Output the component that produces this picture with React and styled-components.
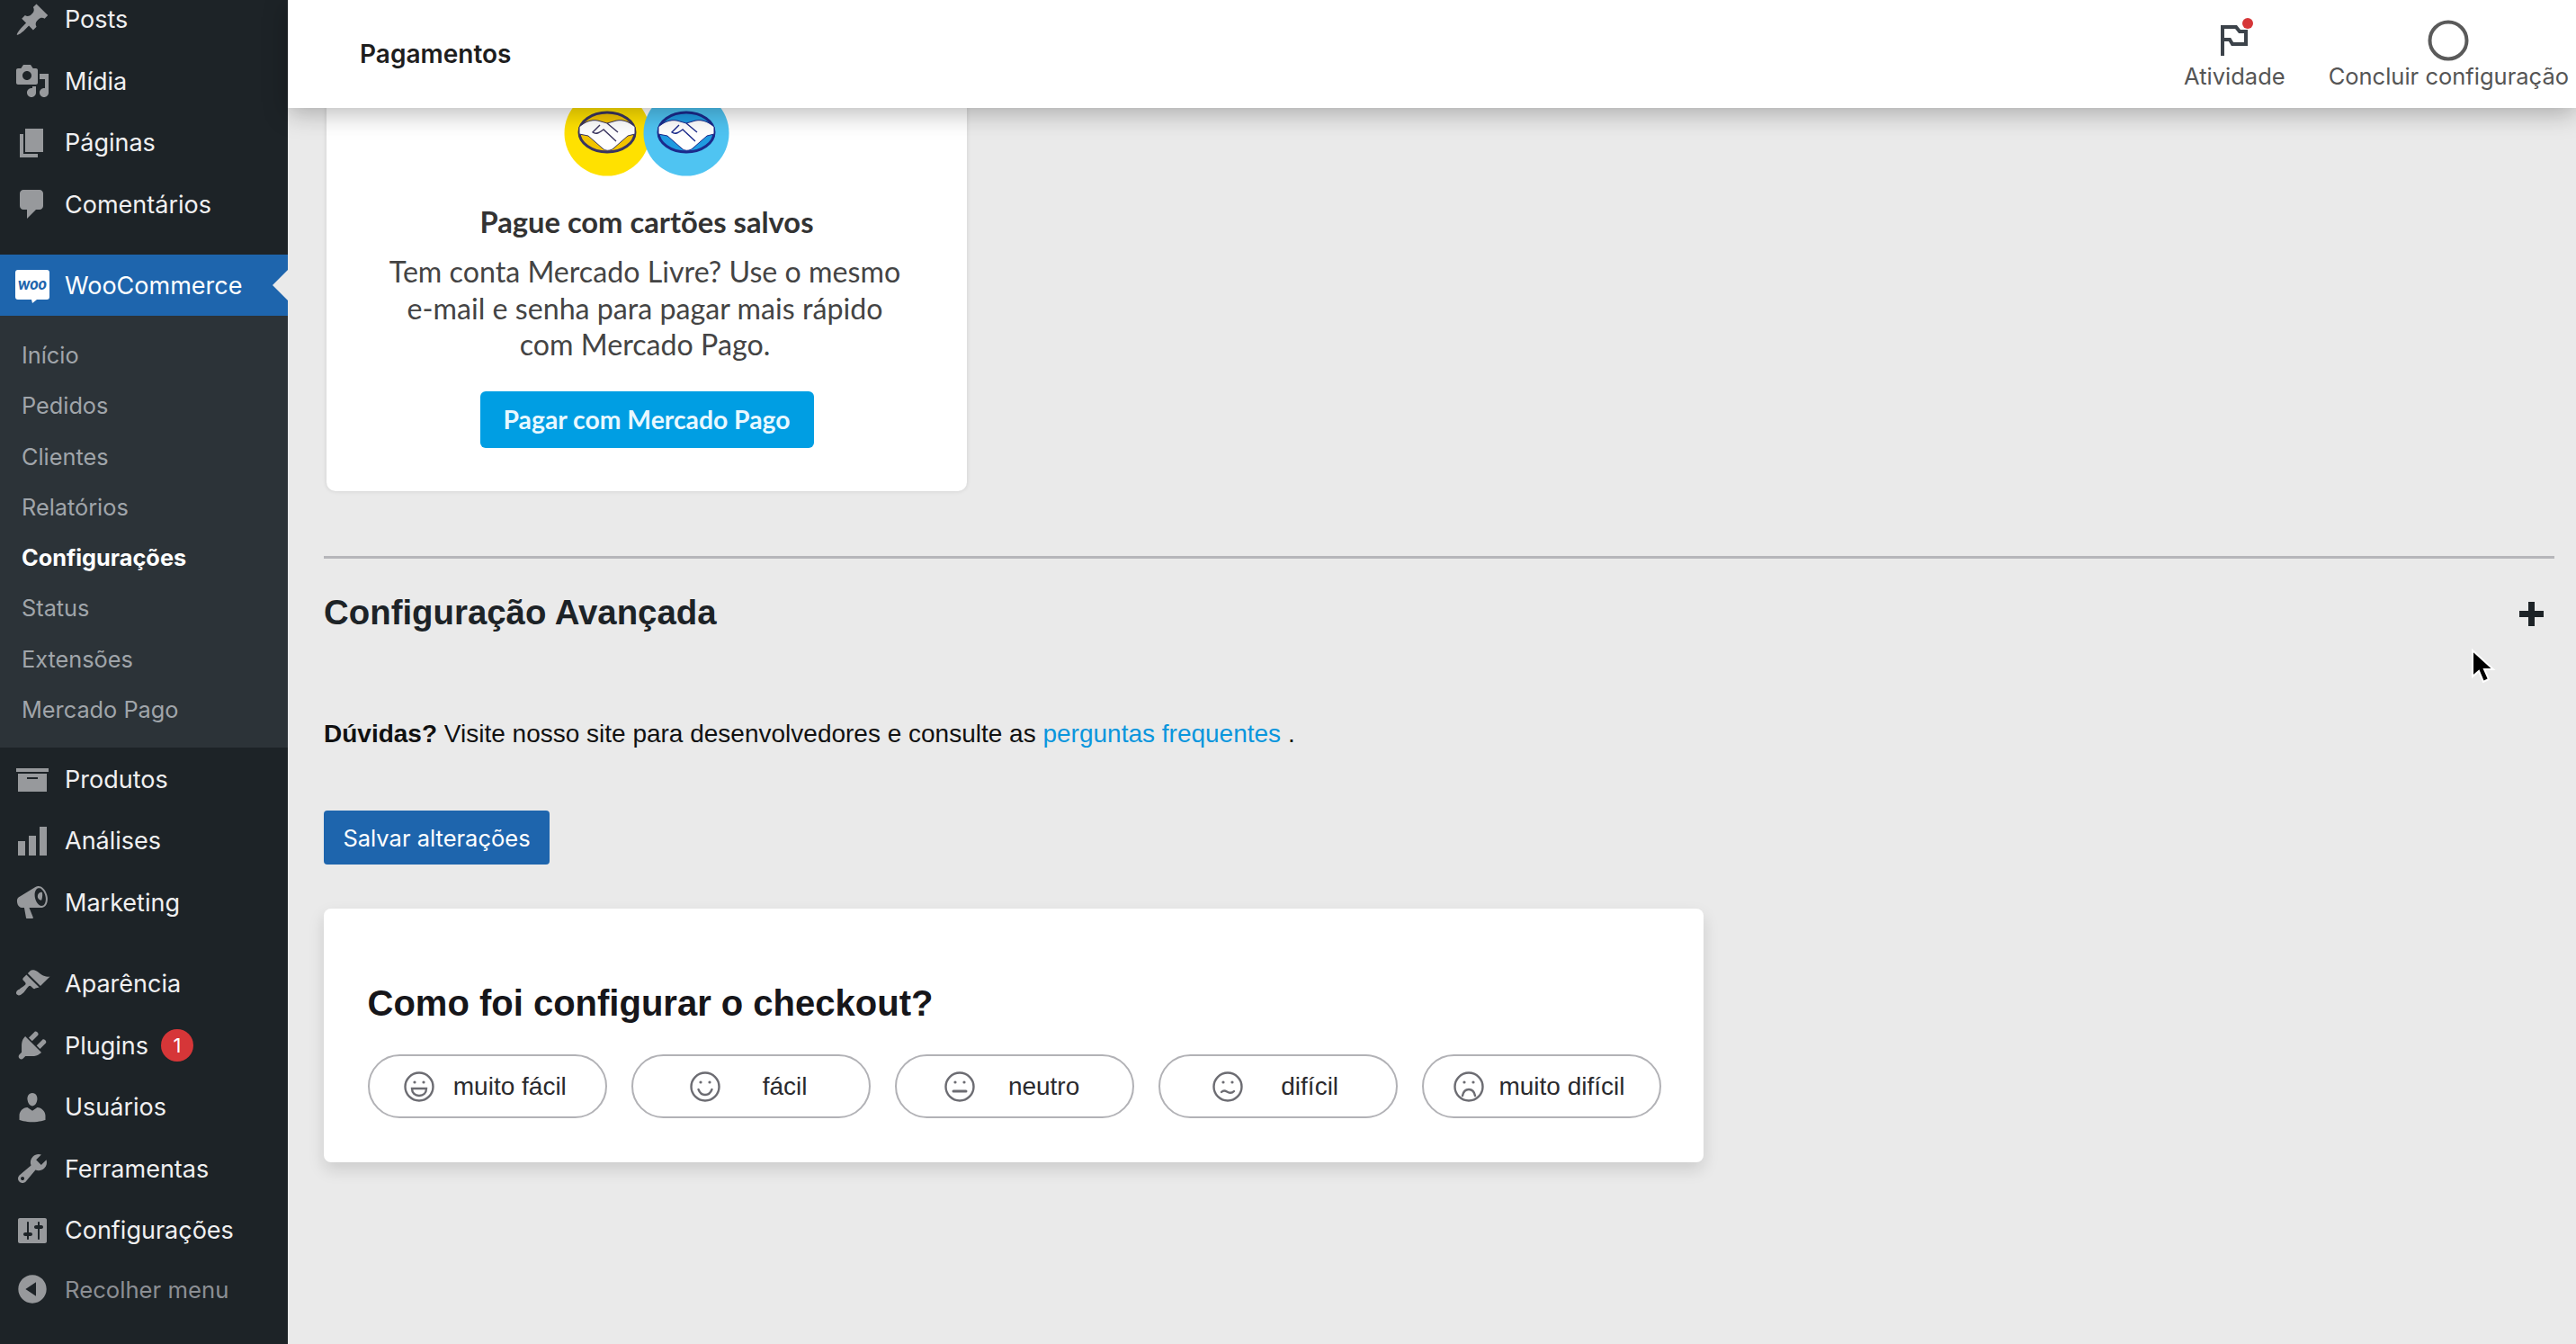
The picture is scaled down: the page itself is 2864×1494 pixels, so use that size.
import styled, { createGlobalStyle } from "styled-components";

const PAGE_BG = "#eaeaea";

const GlobalStyle = createGlobalStyle`
  html, body {
    margin: 0;
    padding: 0;
    background: ${PAGE_BG};
    overflow: hidden;
  }
  * { box-sizing: border-box; }
`;

const Shell = styled.div`
  display: flex;
  width: 2864px;
  height: 1494px;
  overflow: hidden;
  position: relative;
`;

/* sidebar */
const Sidebar = styled.nav`
  width: 320px;
  flex: none;
  background: #1d2327;
  font-family: Inter, "Liberation Sans", sans-serif;
  padding-top: 0;
  overflow: hidden;
`;

const MenuList = styled.div`
  margin-top: ${(p) => p.$top || 0}px;
`;

const MenuRow = styled.div`
  position: relative;
  display: flex;
  align-items: center;
  height: 68.5px;
  padding: 1px 0 0 16px;
  margin-top: ${(p) => (p.$muted ? -3 : 0)}px;
  font-size: ${(p) => (p.$muted ? 25.7 : 27)}px;
  color: ${(p) => (p.$muted ? "#8c8f94" : "#f0f0f1")};
`;

const ActiveRow = styled(MenuRow)`
  height: 68px;
  background: #1e65ad;
  color: #fff;
  &::after {
    content: "";
    position: absolute;
    right: 0;
    top: 17px;
    border: 17px solid transparent;
    border-right-color: ${PAGE_BG};
    border-left-width: 0;
  }
`;

const MenuIcon = styled.svg`
  width: 40px;
  height: 40px;
  margin-right: 16px;
  flex: none;
  fill: #97999c;
`;

const WooIcon = styled.svg`
  width: 40px;
  height: 40px;
  margin-right: 16px;
  flex: none;
`;

const SubMenu = styled.div`
  background: #2c3338;
  padding: 16px 0 14px 24px;
`;

const SubRow = styled.div`
  height: 56.3px;
  line-height: 56.3px;
  font-size: 25.3px;
  font-weight: ${(p) => (p.$current ? 700 : 400)};
  color: ${(p) => (p.$current ? "#fff" : "#a0a5aa")};
`;

const Badge = styled.span`
  width: 36px;
  height: 36px;
  border-radius: 50%;
  margin-left: 14px;
  background: #d63638;
  color: #fff;
  font-size: 22px;
  display: flex;
  align-items: center;
  justify-content: center;
`;

/* main column */
const Main = styled.div`
  flex: 1;
  min-width: 0;
  display: flex;
  flex-direction: column;
`;

const TopBar = styled.header`
  position: relative;
  z-index: 2;
  height: 120px;
  flex: none;
  background: #fff;
  box-shadow: 0 6px 26px rgba(0, 0, 0, 0.28);
  display: flex;
  align-items: center;
  justify-content: space-between;
  padding: 0 8px 0 80px;
  font-family: Inter, "Liberation Sans", sans-serif;
`;

const PageTitle = styled.div`
  font-size: 28px;
  font-weight: 600;
  color: #1e1e1e;
`;

const TopActions = styled.div`
  display: flex;
  gap: 48px;
`;

const TopAction = styled.div`
  display: flex;
  flex-direction: column;
  align-items: center;
  height: 120px;
  padding-top: 20px;
  font-size: 25.5px;
  line-height: 30px;
  color: #555;
`;

const ActionIconBox = styled.div`
  position: relative;
  height: 50px;
  display: flex;
  align-items: center;
`;

const RedDot = styled.span`
  position: absolute;
  top: 0;
  right: -6px;
  width: 12px;
  height: 12px;
  border-radius: 50%;
  background: #d63638;
`;

const Content = styled.main`
  margin-top: -40px;
  padding: 0 24px 0 40px;
`;

/* mercado pago card */
const PayCard = styled.section`
  width: 712px;
  height: 466px;
  margin-left: 3px;
  padding-top: 20px;
  background: #fff;
  border-radius: 10px;
  box-shadow: 0 0 5px rgba(0, 0, 0, 0.12);
  display: flex;
  flex-direction: column;
  align-items: center;
  font-family: Lato, "Open Sans", sans-serif;
`;

const PayLogo = styled.svg`
  width: 184px;
  height: 96px;
  flex: none;
`;

const PayTitle = styled.h3`
  margin: 31px 0 0;
  font-size: 32.7px;
  line-height: 40px;
  font-weight: 700;
  color: #333;
`;

const PayText = styled.p`
  margin: 15px 0 0;
  width: 640px;
  padding-right: 4px;
  text-align: center;
  font-size: 32.2px;
  line-height: 40.5px;
  color: #444;
`;

const PayButton = styled.button`
  margin-top: 31px;
  width: 371px;
  height: 63px;
  border: 0;
  border-radius: 6px;
  background: #009ee3;
  color: #e8f8ff;
  font-family: inherit;
  font-size: 28.3px;
  font-weight: 700;
`;

const Divider = styled.hr`
  margin: 72px 0 0;
  border: 0;
  height: 3px;
  background: #b6b6ba;
`;

const SectionHead = styled.div`
  margin-top: 37px;
  height: 48px;
  display: flex;
  align-items: center;
  justify-content: space-between;
  padding-right: 12px;
`;

const SectionTitle = styled.h2`
  margin: 0 0 3px;
  font-family: "Liberation Sans", Arial, sans-serif;
  font-size: 38.4px;
  line-height: 46px;
  font-weight: 700;
  color: #1d2327;
`;

const HelpLine = styled.p`
  margin: 92px 0 0;
  font-family: "Liberation Sans", Arial, sans-serif;
  font-size: 28px;
  line-height: 36px;
  color: #111;
  a {
    color: #0a96dd;
    text-decoration: none;
  }
`;

const SaveButton = styled.button`
  display: block;
  margin-top: 67px;
  width: 251px;
  height: 60px;
  border: 0;
  border-radius: 4px;
  background: #1e65ad;
  color: #fff;
  font-family: Inter, "Liberation Sans", sans-serif;
  font-size: 25.5px;
`;

/* feedback card */
const FeedbackCard = styled.section`
  margin-top: 49px;
  width: 1534px;
  height: 282px;
  padding: 81px 0 0 48.5px;
  background: #fff;
  border-radius: 8px;
  box-shadow: 0 8px 18px rgba(0, 0, 0, 0.13);
  font-family: "Liberation Sans", Arial, sans-serif;
`;

const FeedbackTitle = styled.h2`
  margin: 0 0 33px;
  font-size: 40px;
  line-height: 48px;
  font-weight: 700;
  color: #16161a;
`;

const PillRow = styled.div`
  display: flex;
  gap: 26.5px;
`;

const Pill = styled.button`
  width: 266.5px;
  height: 71px;
  border: 2px solid #b2b2b6;
  border-radius: 36px;
  background: #fff;
  padding: 0 5px 0 0;
  display: flex;
  align-items: center;
  justify-content: space-evenly;
  font-family: inherit;
  font-size: 28px;
  color: #2a2a2e;
`;

const Face = styled.svg`
  width: 34px;
  height: 34px;
  margin-right: -17px;
  flex: none;
  fill: none;
  stroke: #6c6c72;
  stroke-width: 2.4;
  stroke-linecap: round;
`;

const Cursor = styled.svg`
  position: absolute;
  left: 2744px;
  top: 720px;
  width: 32px;
  height: 42px;
`;

const ICONS = {
  posts:
    "M10.44 3.02l1.82-1.82 6.36 6.35-1.83 1.82c-1.05-.68-2.48-.57-3.41.36l-.75.75c-.92.93-1.04 2.35-.35 3.41l-1.83 1.82-2.41-2.41-2.8 2.79c-.42.42-3.38 2.71-3.8 2.29s1.86-3.39 2.28-3.81l2.79-2.79L4.1 9.36l1.83-1.82c1.05.69 2.48.57 3.4-.36l.75-.75c.93-.92 1.05-2.35.36-3.41z",
  media:
    "M13 11V4c0-.55-.45-1-1-1h-1.67L9 1H5L3.67 3H2c-.55 0-1 .45-1 1v7c0 .55.45 1 1 1h10c.55 0 1-.45 1-1zM7 4.5c1.38 0 2.5 1.12 2.5 2.5S8.38 9.5 7 9.5 4.5 8.38 4.5 7 5.62 4.5 7 4.5zM14 6h5v10.5c0 1.38-1.12 2.5-2.5 2.5S14 17.88 14 16.5s1.12-2.5 2.5-2.5c.17 0 .34.02.5.05V9h-3V6zm-4 8.05V13h2v3.5c0 1.38-1.12 2.5-2.5 2.5S7 17.88 7 16.5 8.12 14 9.5 14c.17 0 .34.02.5.05z",
  pages: "M6 15V2h10v13H6zm-1 1h8v2H3V5h2v11z",
  comments:
    "M5 2h9c1.1 0 2 .9 2 2v7c0 1.1-.9 2-2 2h-2l-5 5v-5H5c-1.1 0-2-.9-2-2V4c0-1.1.9-2 2-2z",
  products: "M19 4v2H1V4h18zM2 7h16v10H2V7zm11 3V9H7v1h6z",
  analytics: "M18 18V2h-4v16h4zm-6 0V7H8v11h4zm-6 0v-8H2v8h4z",
  marketing:
    "M18.15 5.94c.46 1.62.38 3.22-.02 4.48-.42 1.28-1.26 2.18-2.3 2.48-.16.06-.26.06-.4.06-.06.02-.12.02-.18.02-.06.02-.14.02-.22.02h-6.8l2.22 5.5c.02.14-.06.26-.14.34-.08.1-.24.16-.34.16H6.95c-.1 0-.26-.06-.34-.16-.08-.08-.16-.2-.14-.34l-1-5.5H4.25l-.02-.02c-.5.06-1.08-.18-1.54-.62s-.88-1.08-1.06-1.88c-.24-.8-.2-1.56-.02-2.2.18-.62.58-1.08 1.06-1.3l.02-.02 9-5.4c.1-.06.18-.1.24-.16.06-.04.14-.08.24-.12.16-.08.28-.12.5-.18 1.04-.3 2.24.1 3.22 1 .98.88 1.8 2.24 2.26 3.86zm-2.58 5.98h-.02c.4-.1.74-.34 1.04-.7.58-.7.86-1.76.86-3.04 0-.64-.1-1.3-.28-1.98-.34-1.36-1.02-2.5-1.78-3.24-.38-.38-.8-.64-1.18-.78-.2-.06-.42-.1-.62-.1-.12 0-.24.02-.36.04-.42.1-.78.34-1.06.7-.6.74-.88 1.8-.88 3.06 0 .64.1 1.32.28 2 .34 1.36 1.02 2.5 1.78 3.24.4.38.8.64 1.2.76.2.08.4.1.6.1.14 0 .28-.02.4-.06zm-.44-3.12c-.12.02-.24.02-.34.02-.3 0-.6-.1-.86-.26-.58-.38-1.02-1.1-1.02-1.92 0-1.24 1-2.24 2.24-2.24.08 0 .16 0 .24.02.14.56.2 1.1.2 1.64 0 .98-.2 1.92-.46 2.74z",
  appearance:
    "M14.48 11.06L7.41 3.99l1.5-1.5c.5-.56 2.3-.47 3.51.32 1.21.8 1.43 1.28 2.91 2.1 1.18.64 2.45 1.26 4.45.85zm-.71.71L6.7 4.7 4.93 6.47c-.39.39-.39 1.02 0 1.41l1.06 1.06c.39.39.39 1.03 0 1.42-.6.6-1.43 1.11-2.21 1.69-.35.26-.7.53-1.01.84C1.43 13.23.4 14.81 1.4 15.81c.99 1 2.58-.03 3.92-1.37.31-.31.58-.66.85-1.02.57-.78 1.08-1.6 1.69-2.21.39-.39 1.02-.39 1.41 0l1.06 1.06c.39.39 1.02.39 1.41 0z",
  plugins:
    "M13.11 4.36L9.87 7.6 8 5.73l3.24-3.24c.35-.34 1.05-.2 1.56.32.52.51.66 1.21.31 1.55zm-8 1.77l.91-1.12 9.01 9.01-1.19.84c-.71.71-2.63 1.16-3.82 1.16H6.14L4.9 17.26c-.59.59-1.54.59-2.12 0-.59-.58-.59-1.53 0-2.12l1.24-1.24v-3.88c0-1.13.4-3.19 1.09-3.89zm7.26 3.97l3.24-3.24c.34-.35 1.04-.21 1.55.31.52.51.66 1.21.31 1.55l-3.24 3.25z",
  users:
    "M10 9.25c-2.27 0-2.73-3.44-2.73-3.44C7 4.02 7.82 2 9.97 2c2.16 0 2.98 2.02 2.71 3.81 0 0-.41 3.44-2.68 3.44zm0 2.57L12.72 10c2.39 0 4.52 2.33 4.52 4.53v2.49s-3.65 1.13-7.24 1.13c-3.65 0-7.24-1.13-7.24-1.13v-2.49c0-2.25 1.94-4.48 4.47-4.48z",
  tools:
    "M16.68 9.77c-1.34 1.34-3.3 1.67-4.95.99l-5.41 6.52c-.99.99-2.59.99-3.58 0s-.99-2.59 0-3.57l6.52-5.42c-.68-1.65-.35-3.61.99-4.95 1.28-1.28 3.12-1.62 4.72-1.06l-2.89 2.89 2.82 2.82 2.86-2.87c.53 1.58.18 3.39-1.08 4.65zM3.81 16.21c.4.39 1.04.39 1.43 0 .4-.4.4-1.04 0-1.43-.39-.4-1.03-.4-1.43 0-.39.39-.39 1.03 0 1.43z",
  settings:
    "M18 16V4c0-.55-.45-1-1-1H3c-.55 0-1 .45-1 1v12c0 .55.45 1 1 1h14c.55 0 1-.45 1-1zM8 11h1c.55 0 1 .45 1 1s-.45 1-1 1H8v1.5c0 .28-.22.5-.5.5s-.5-.22-.5-.5V13H6c-.55 0-1-.45-1-1s.45-1 1-1h1V5.5c0-.28.22-.5.5-.5s.5.22.5.5V11zm5-2h-1c-.55 0-1-.45-1-1s.45-1 1-1h1V5.5c0-.28.22-.5.5-.5s.5.22.5.5V7h1c.55 0 1 .45 1 1s-.45 1-1 1h-1v5.5c0 .28-.22.5-.5.5s-.5-.22-.5-.5V9z",
  collapse:
    "M10 2.16c4.33 0 7.84 3.51 7.84 7.84s-3.51 7.84-7.84 7.84S2.16 14.33 2.16 10 5.71 2.16 10 2.16zm2 11.72V6.12L6.18 9.97z",
};

const SUB_ITEMS = [
  "Início",
  "Pedidos",
  "Clientes",
  "Relatórios",
  "Configurações",
  "Status",
  "Extensões",
  "Mercado Pago",
];

const MOUTHS = {
  "muito fácil": <path d="M9 19h16c0 5-3.5 8-8 8s-8-3-8-8z" />,
  fácil: <path d="M9.5 20c1.5 4 4.5 6 7.5 6s6-2 7.5-6" />,
  neutro: <path d="M10 22h14" strokeWidth="3" />,
  difícil: <path d="M10 23c3-3 5-1 7 0s5 1 7-1" />,
  "muito difícil": <path d="M10 27c1-5 4-7 7-7s6 2 7 7" />,
};

const FEEDBACK = ["muito fácil", "fácil", "neutro", "difícil", "muito difícil"];

function Icon({ name }) {
  return (
    <MenuIcon viewBox="0 0 20 20">
      <path d={ICONS[name]} />
    </MenuIcon>
  );
}

function Item({ icon, label, muted, children }) {
  return (
    <MenuRow $muted={muted}>
      <Icon name={icon} />
      {label}
      {children}
    </MenuRow>
  );
}

// handshake inside the mercado livre / mercado pago ovals
function Handshake({ cx, band, ring }) {
  return (
    <g transform={`translate(${cx} 47)`}>
      <ellipse rx="31" ry="22" fill={band} stroke={ring} strokeWidth="3" />
      <path
        d="M-31 -6c8 -7 16 -9 24 -6l7 2 7 -2c8 -3 16 -1 24 6v8l-8 2 -16 14c-4 3 -9 3 -12 0l-16 -14 -10 -2z"
        fill="#fff"
        stroke={ring}
        strokeWidth="1"
      />
      <path d="M-8 -8l-8 8c4 3 8 0 12 -3l14 13M0 -10l12 10" fill="none" stroke={ring} strokeWidth="1.4" />
    </g>
  );
}

function App() {
  return (
    <Shell>
      <GlobalStyle />
      <Sidebar>
        <MenuList $top={-13}>
          <Item icon="posts" label="Posts" />
          <Item icon="media" label="Mídia" />
          <Item icon="pages" label="Páginas" />
          <Item icon="comments" label="Comentários" />
        </MenuList>
        <MenuList $top={22}>
          <ActiveRow>
            <WooIcon viewBox="0 0 40 40">
              <path
                d="M4 2h32c2 0 3 1 3 3v27c0 2-1 3-3 3H25l-5 4-1-4H4c-2 0-3-1-3-3V5c0-2 1-3 3-3z"
                fill="#fff"
              />
              <text
                x="20"
                y="24"
                textAnchor="middle"
                fontFamily="Lato, sans-serif"
                fontSize="18"
                fontWeight="900"
                fontStyle="italic"
                fill="#1e65ad"
              >
                woo
              </text>
            </WooIcon>
            WooCommerce
          </ActiveRow>
          <SubMenu>
            {SUB_ITEMS.map((item) => (
              <SubRow key={item} $current={item === "Configurações"}>
                {item}
              </SubRow>
            ))}
          </SubMenu>
          <Item icon="products" label="Produtos" />
          <Item icon="analytics" label="Análises" />
          <Item icon="marketing" label="Marketing" />
        </MenuList>
        <MenuList $top={22}>
          <Item icon="appearance" label="Aparência" />
          <Item icon="plugins" label="Plugins">
            <Badge>1</Badge>
          </Item>
          <Item icon="users" label="Usuários" />
          <Item icon="tools" label="Ferramentas" />
          <Item icon="settings" label="Configurações" />
          <Item icon="collapse" label="Recolher menu" muted />
        </MenuList>
      </Sidebar>

      <Main>
        <TopBar>
          <PageTitle>Pagamentos</PageTitle>
          <TopActions>
            <TopAction>
              <ActionIconBox>
                <svg width="30" height="34" viewBox="0 0 30 34">
                  <path
                    d="M2 34V2h15l4 5h7v14H13l-3-5H2"
                    fill="none"
                    stroke="#3c434a"
                    strokeWidth="4"
                  />
                </svg>
                <RedDot />
              </ActionIconBox>
              Atividade
            </TopAction>
            <TopAction>
              <ActionIconBox>
                <svg width="46" height="46" viewBox="0 0 46 46">
                  <circle cx="23" cy="23" r="20.5" fill="none" stroke="#5a5a5a" strokeWidth="4" />
                </svg>
              </ActionIconBox>
              Concluir configuração
            </TopAction>
          </TopActions>
        </TopBar>

        <Content>
          <PayCard>
            <PayLogo viewBox="0 0 184 96">
              <circle cx="48" cy="48" r="47.5" fill="#ffe100" />
              <circle cx="136" cy="48" r="47.5" fill="#4fc4f2" />
              <Handshake cx={48} band="#f2c400" ring="#3a3560" />
              <Handshake cx={136} band="#1f9ae0" ring="#1b2a8c" />
            </PayLogo>
            <PayTitle>Pague com cartões salvos</PayTitle>
            <PayText>
              Tem conta Mercado Livre? Use o mesmo
              <br />
              e-mail e senha para pagar mais rápido
              <br />
              com Mercado Pago.
            </PayText>
            <PayButton>Pagar com Mercado Pago</PayButton>
          </PayCard>

          <Divider />

          <SectionHead>
            <SectionTitle>Configuração Avançada</SectionTitle>
            <svg width="27" height="27" viewBox="0 0 27 27">
              <path d="M10 0h7v10h10v7H17v10h-7V17H0v-7h10z" fill="#1d2327" />
            </svg>
          </SectionHead>

          <HelpLine>
            <strong>Dúvidas?</strong> Visite nosso site para desenvolvedores e consulte as{" "}
            <a href="#faq">perguntas frequentes</a> .
          </HelpLine>

          <SaveButton>Salvar alterações</SaveButton>

          <FeedbackCard>
            <FeedbackTitle>Como foi configurar o checkout?</FeedbackTitle>
            <PillRow>
              {FEEDBACK.map((label) => (
                <Pill key={label}>
                  <Face viewBox="0 0 34 34">
                    <circle cx="17" cy="17" r="15.5" />
                    <circle cx="12" cy="12" r="1.6" fill="#6c6c72" stroke="none" />
                    <circle cx="22" cy="12" r="1.6" fill="#6c6c72" stroke="none" />
                    {MOUTHS[label]}
                  </Face>
                  <span>{label}</span>
                </Pill>
              ))}
            </PillRow>
          </FeedbackCard>
        </Content>
      </Main>

      <Cursor viewBox="0 0 32 42">
        <path d="M5 3v29l7-6 5 12 6-3-5-11h10z" fill="#000" stroke="#fff" strokeWidth="2" />
      </Cursor>
    </Shell>
  );
}

export default App;
